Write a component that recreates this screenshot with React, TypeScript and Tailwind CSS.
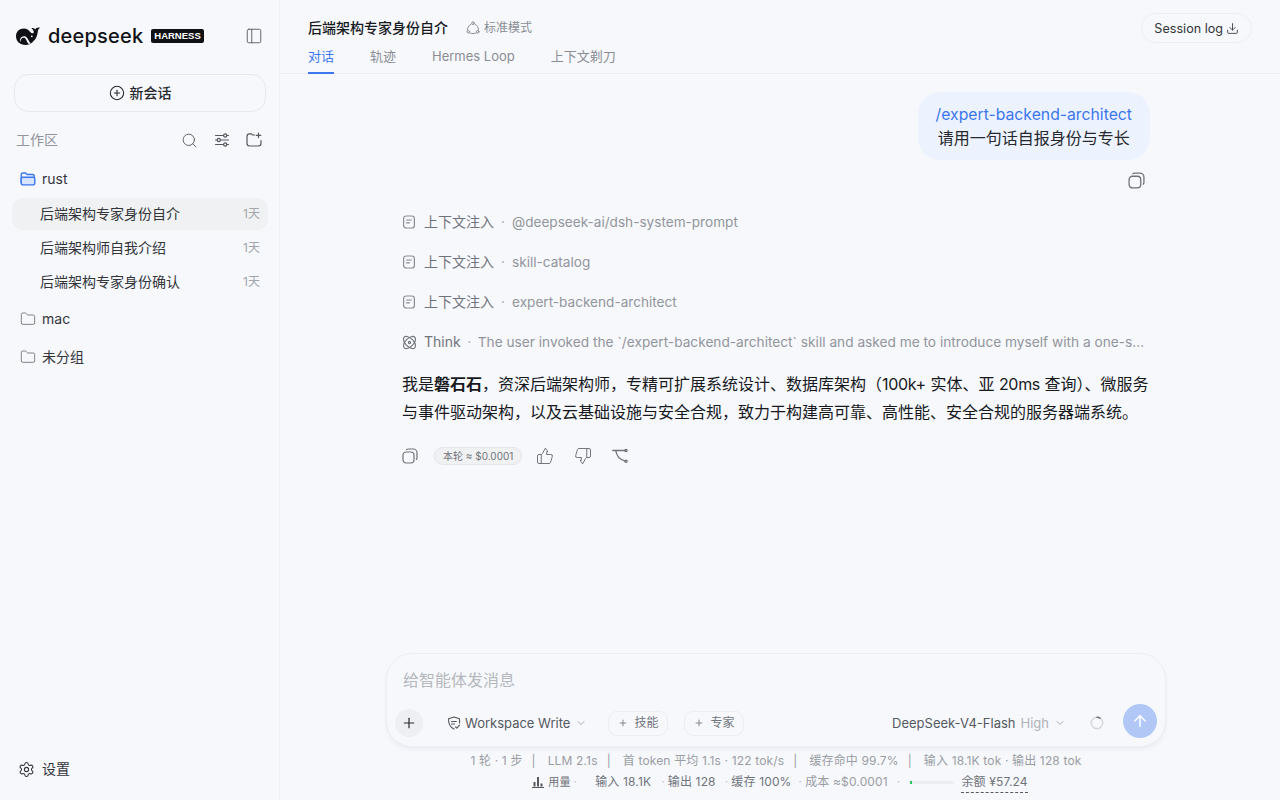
import {
  ArrowUp,
  ChevronDown,
  CirclePlus,
  Download,
  Folder,
  PanelLeft,
  Plus,
  Search,
  Settings,
  ThumbsDown,
  ThumbsUp,
} from "lucide-react";

const font = "font-['Inter','Noto_Sans_CJK_SC',sans-serif]";

const CopyIcon = ({ className }: { className?: string }) => (
  <svg viewBox="0 0 16 16" fill="none" stroke="currentColor" strokeWidth="1.200" className={className}>
    <rect x="1" y="4" width="11" height="11" rx="3.200" />
    <path d="M4.600 1.500c.5-.3 1-.5 1.700-.5h4.900C13.300 1 15 2.700 15 4.800v4.900c0 .7-.2 1.300-.6 1.800" strokeLinecap="round" />
  </svg>
);

const DocIcon = () => (
  <svg viewBox="0 0 14 14" fill="none" stroke="currentColor" strokeWidth="1.200" className="size-[14px] text-[#8a8d94]">
    <rect x="1.600" y="1" width="10.800" height="12" rx="2.600" />
    <path d="M4.500 5h5M4.500 7.800h3" strokeLinecap="round" />
  </svg>
);

const ThinkIcon = () => (
  <svg viewBox="0 0 14 14" fill="none" stroke="currentColor" strokeWidth="1.100" className="size-[15px] text-[#71747b]">
    <ellipse cx="7" cy="7" rx="7" ry="3.800" transform="rotate(45 7 7)" />
    <ellipse cx="7" cy="7" rx="7" ry="3.800" transform="rotate(-45 7 7)" />
    <circle cx="7" cy="7" r="1" />
  </svg>
);

const Whale = () => (
  <svg viewBox="0 0 24 18" className="h-[18px] w-6 shrink-0 text-[#0f1115]" fill="currentColor">
    <path d="M0 9C0 4.500 3.500 1.500 7.800 1.500c3.200 0 5 1.700 6.500 3.500.8 1 2.200 1.700 3.100 1 .8-.6.300-2-.4-3-.4-.7-1-1.300-1.600-1.700C16.800.8 18.200 1.300 19 2.600 19.800 1.200 21.600.3 24 .7c-1.200.9-2 2.100-2.200 3.700-.4 3.900-1.700 7.300-4.200 9.600C15.500 16.900 12.500 18 9.500 18 4 18 0 14.300 0 9z" />
    <path fill="#f6f8fc" d="M4.200 15.200c-1-3.400 1.300-6.400 4.300-6 3.300.5 3.600 4.500 6.200 7-.7.400-1.300.6-2 .7-2.300-1.900-2.100-5.500-4.700-6.100-1.900-.4-3.500 1.600-3.800 4.400z" />
    <circle cx="15.800" cy="9.300" r=".9" fill="#f6f8fc" />
  </svg>
);

const SlidersIcon = () => (
  <svg viewBox="0 0 16 16" fill="none" stroke="currentColor" strokeWidth="1.200" strokeLinecap="round" className="size-4 text-[#55585f]">
    <path d="M1.500 3.500h8M13 3.500h1.500M1.500 8h1.500M6.500 8h8M1.500 12.500h8M13 12.500h1.500" />
    <circle cx="11.200" cy="3.500" r="1.600" />
    <circle cx="4.800" cy="8" r="1.600" />
    <circle cx="11.200" cy="12.500" r="1.600" />
  </svg>
);

const NewFolderIcon = () => (
  <svg viewBox="0 0 16 16" fill="none" stroke="currentColor" strokeWidth="1.200" strokeLinecap="round" className="size-4 text-[#55585f]">
    <path d="M8.500 3H6.600L5.300 1.800H3.400C2.100 1.800 1 2.900 1 4.200v7.400c0 1.300 1.100 2.400 2.400 2.400h9.200c1.300 0 2.400-1.100 2.400-2.400V8.500" />
    <path d="M12.500 1v4.600M10.200 3.300h4.600" />
  </svg>
);

const BranchIcon = () => (
  <svg viewBox="0 0 16 16" fill="none" stroke="currentColor" strokeWidth="1.300" strokeLinecap="round" strokeLinejoin="round" className="size-4 text-[#6f7279]">
    <path d="M.8 2.500h12.400M3.800 2.500c.6 5 3.400 9 9.400 10.600" />
    <circle cx="14" cy="2.500" r="1.100" />
    <circle cx="14" cy="13.200" r="1.100" />
  </svg>
);

const ShieldIcon = () => (
  <svg viewBox="0 0 14 14" fill="none" stroke="currentColor" strokeWidth="1.100" strokeLinecap="round" strokeLinejoin="round" className="size-[14px] shrink-0 text-[#55585f]">
    <path d="M12.500 7c.1-1.300.1-2.700 0-4.200L7 1 1.500 2.800C1.300 8.500 3.500 11.500 7 13" />
    <path d="M4.500 5.500h4.800M4.500 8h3M8.500 11l1.300 1.200 2.700-3" />
  </svg>
);

const ModeIcon = () => (
  <svg viewBox="0 0 14 14" fill="none" stroke="currentColor" strokeWidth="1" strokeLinecap="round" className="size-[14px] shrink-0 text-[#8a8d94]">
    <circle cx="7" cy="2.200" r="1.300" />
    <circle cx="2.300" cy="10.800" r="1.300" />
    <circle cx="11.700" cy="10.800" r="1.300" />
    <path d="M5 3.200C2.900 4.300 1.400 6.400 1.500 9M9 3.200c2.100 1.100 3.600 3.200 3.500 5.800M4 12c1.900.8 4.100.8 6 0" />
  </svg>
);

const OpenFolderIcon = () => (
  <svg viewBox="0 0 16 16" fill="none" stroke="#3b76ef" strokeWidth="1.400" strokeLinejoin="round" className="size-4 shrink-0">
    <path d="M1.200 12V3.800c0-1 .8-1.800 1.800-1.800h2.500l1.500 1.500h5.500c1 0 1.800.8 1.800 1.800v1" />
    <path d="M1.200 7.700c0-.8.600-1.400 1.400-1.400h10.800c.8 0 1.400.6 1.400 1.400v4c0 1.200-1 2.200-2.200 2.200H3.400c-1.200 0-2.200-1-2.200-2.200z" fill="#d6e4fd" />
  </svg>
);

const UsageIcon = () => (
  <svg viewBox="0 0 12 12" fill="currentColor" className="size-3 shrink-0 text-[#55585f]">
    <path d="M0 11h12v1H0zM1.500 6h2v4.500h-2zM5 1h2v9.500H5zM8.500 7.500h2v3h-2z" />
  </svg>
);

const Spinner = () => (
  <svg viewBox="0 0 16 16" fill="none" strokeWidth="1.600" className="size-[14px]">
    <circle cx="8" cy="8" r="6.500" stroke="#d4d6da" />
    <path d="M8 1.500a6.500 6.500 0 0 1 3.500 1" stroke="#6f7279" strokeLinecap="round" />
  </svg>
);

const Sep = () => <span className="px-[3px] text-[#c2c5ca]">·</span>;
const Bar = () => <span className="ml-[9px] mr-[12px]">|</span>;

function Sidebar() {
  const chats = ["后端架构专家身份自介", "后端架构师自我介绍", "后端架构专家身份确认"];
  return (
    <aside className="flex h-full w-[280px] shrink-0 flex-col border-r border-[#eef0f3] pl-3 pr-[11px]">
      <div className="flex h-[74px] shrink-0 items-center pb-[2px] pl-1">
        <Whale />
        <span className="ml-2 text-[20px] font-medium leading-none tracking-[0.2px] text-[#0f1115]">deepseek</span>
        <span className="ml-2 rounded-[2px] bg-[#0f1115] px-[3px] font-['Liberation_Sans',sans-serif] text-[9.500px] font-bold leading-[14px] text-white">HARNESS</span>
        <PanelLeft className="ml-auto mr-[5px] size-[18px] text-[#55585f]" strokeWidth={1.2} />
      </div>

      <button className="mx-[2px] flex h-[38px] shrink-0 items-center justify-center gap-[5px] rounded-[14px] border border-[#e7e9ed] text-sm font-medium text-[#26282d]">
        <CirclePlus className="size-4" strokeWidth={1.6} />
        新会话
      </button>

      <div className="mt-[17px] flex h-[22px] items-center pl-1 pr-[6px]">
        <span className="text-sm text-[#92959b]">工作区</span>
        <div className="ml-auto flex items-center gap-4 text-[#55585f]">
          <Search className="size-[17px]" strokeWidth={1.3} />
          <SlidersIcon />
          <NewFolderIcon />
        </div>
      </div>

      <div className="mt-[18px] flex h-[20px] items-center gap-[6px] pl-2 text-sm text-[#33353a]">
        <OpenFolderIcon />
        rust
      </div>
      <div className="mt-[9px] flex flex-col gap-[2px]">
        {chats.map((c, i) => (
          <div key={c} className={`flex h-8 items-center justify-between rounded-[10px] pl-7 pr-2 text-sm text-[#33353a] ${i === 0 ? "bg-[#f0f1f3]" : ""}`}>
            {c}
            <span className="text-xs text-[#a3a6ab]">1天</span>
          </div>
        ))}
      </div>
      <div className="mt-[11px] flex h-[20px] items-center gap-[6px] pl-2 text-sm text-[#33353a]">
        <Folder className="size-4 text-[#6f7279]" strokeWidth={1.3} />
        mac
      </div>
      <div className="mt-[18px] flex h-[20px] items-center gap-[6px] pl-2 text-sm text-[#33353a]">
        <Folder className="size-4 text-[#6f7279]" strokeWidth={1.3} />
        未分组
      </div>

      <div className="mb-[21px] mt-auto flex h-5 items-center gap-[7px] pl-[6px] text-sm text-[#33353a]">
        <Settings className="size-[17px]" strokeWidth={1.5} />
        设置
      </div>
    </aside>
  );
}

function Header() {
  return (
    <header className="relative flex h-[74px] shrink-0 flex-col border-b border-[#eceef2] px-7 pt-[18px]">
      <div className="flex h-5 items-center">
        <span className="text-sm font-medium text-[#17191d]">后端架构专家身份自介</span>
        <span className="ml-[18px]"><ModeIcon /></span>
        <span className="ml-[4px] text-xs text-[#8a8d94]">标准模式</span>
      </div>
      <nav className="mt-2 flex gap-9 text-[13px]">
        <span className="border-b-2 border-[#3b76ef] pb-[6px] leading-5 text-[#3b76ef]">对话</span>
        <span className="leading-5 text-[#8a8d94]">轨迹</span>
        <span className="leading-5 text-[#8a8d94]">Hermes Loop</span>
        <span className="leading-5 text-[#8a8d94]">上下文剃刀</span>
      </nav>
      <button className="absolute right-7 top-[13px] flex h-[30px] items-center gap-[3px] rounded-full border border-[#eceef2] px-3 text-[12.600px] text-[#33353a]">
        <span className="mt-[2px]">Session log</span>
        <Download className="size-[13px]" strokeWidth={1.6} />
      </button>
    </header>
  );
}

function ContextRow({ tail }: { tail: string }) {
  return (
    <div className="flex h-10 items-center text-sm">
      <DocIcon />
      <span className="ml-2 text-[#71747b]">上下文注入</span>
      <span className="px-[7px] text-[#a3a6ab]">·</span>
      <span className="mt-[2px] text-[13.600px] text-[#92959b]">{tail}</span>
    </div>
  );
}

function Conversation() {
  return (
    <div className="min-h-0 flex-1 pr-2">
      <div className="mx-auto flex w-[748px] flex-col pt-[18px]">
        <div className="self-end rounded-[22px] bg-[#edf3fe] px-[18px] py-[10px] text-center text-[15.750px] leading-6 text-[#26282d]">
          <div className="pt-px text-[#3b76ef]">/expert-backend-architect</div>
          <div className="-mt-px text-base">请用一句话自报身份与专长</div>
        </div>
        <div className="mt-3 flex justify-end pr-[5px] text-[#6f7279]">
          <CopyIcon className="size-[17px]" />
        </div>

        <div className="mt-[13px]">
          <ContextRow tail="@deepseek-ai/dsh-system-prompt" />
          <ContextRow tail="skill-catalog" />
          <ContextRow tail="expert-backend-architect" />
          <div className="flex h-10 items-center pr-[5px] text-sm">
            <ThinkIcon />
            <span className="ml-[7px] text-[#71747b]">Think</span>
            <span className="px-[6.500px] text-[#a3a6ab]">·</span>
            <span className="mt-[2px] min-w-0 flex-1 truncate text-[13.700px] text-[#92959b]">The user invoked the `/expert-backend-architect` skill and asked me to introduce myself with a one-sentence summary of identity</span>
          </div>
        </div>

        <p className="mt-2 whitespace-nowrap text-base leading-7 text-[#17191d]">
          我是<b className="font-bold">磐石石</b>，资深后端架构师，专精可扩展系统设计、数据库架构（<span className="tracking-[-0.3px]">100k+</span> 实体、亚 <span className="tracking-[-0.3px]">20ms</span> 查询）、微服务
          <br />
          与事件驱动架构，以及云基础设施与安全合规，致力于构建高可靠、高性能、安全合规的服务器端系统。
        </p>

        <div className="mt-[21px] flex items-center text-[#6f7279]">
          <CopyIcon className="size-4" />
          <span className="ml-4 flex h-[18px] items-center rounded-full border border-[#e3e5e9] bg-[#f0f1f3] px-2 text-[10px] text-[#71747b]">本轮 ≈ $0.0001</span>
          <ThumbsUp className="ml-[14px] size-[18px]" strokeWidth={1.3} />
          <ThumbsDown className="ml-5 size-[18px]" strokeWidth={1.3} />
          <span className="ml-[20px]"><BranchIcon /></span>
        </div>
      </div>
    </div>
  );
}

function Composer() {
  return (
    <div className="pr-2">
      <div className="mx-auto flex h-[94px] w-[780px] flex-col rounded-[26px] border border-[#eceef2] bg-[#f7f8fc] pl-[8px] pr-2 shadow-[0_3px_4px_rgba(20,30,50,0.05)]">
        <div className="mt-4 pl-2 text-base leading-5 text-[#b5b8bd]">给智能体发消息</div>
        <div className="mt-[14px] flex items-center">
          <span className="flex size-[28px] shrink-0 items-center justify-center rounded-full bg-[#eeeff2] text-[#26282d]">
            <Plus className="size-4" strokeWidth={1.8} />
          </span>
          <span className="ml-[24px]"><ShieldIcon /></span>
          <span className="ml-[4px] mt-[2px] text-[13px] text-[#55585f]">Workspace Write</span>
          <ChevronDown className="ml-[5px] size-3 text-[#8a8d94]" strokeWidth={1.4} />
          <span className="ml-[21px] flex h-[25px] items-center gap-[6px] rounded-[9px] border border-[#eceef2] px-[9px] text-xs text-[#71747b]"><Plus className="size-[10px]" />技能</span>
          <span className="ml-4 flex h-[25px] items-center gap-[6px] rounded-[9px] border border-[#eceef2] px-[9px] text-xs text-[#71747b]"><Plus className="size-[10px]" />专家</span>
          <span className="ml-auto mt-[2px] text-[13px] text-[#55585f]">DeepSeek-V4-Flash</span>
          <span className="ml-[5px] mt-[2px] text-[13px] text-[#b0b3b8]">High</span>
          <ChevronDown className="ml-[5px] size-3 text-[#8a8d94]" strokeWidth={1.4} />
          <span className="ml-[24px] flex"><Spinner /></span>
          <span className="mb-1 ml-[19px] flex size-[34px] items-center justify-center rounded-full bg-[#b1c8f7] text-white">
            <ArrowUp className="size-[18px]" strokeWidth={2} />
          </span>
        </div>
      </div>
    </div>
  );
}

function Stats() {
  return (
    <div className="flex h-[53px] shrink-0 flex-col items-center pr-2 text-xs tracking-[0.15px] text-[#9a9da3]">
      <div className="mt-[6px] flex h-[16px] items-center">
        <span>1 轮 · 1 步</span><Bar /><span>LLM 2.1s</span><Bar /><span>首 token 平均 1.1s · 122 tok/s</span><Bar /><span>缓存命中 99.7%</span><Bar /><span>输入 18.1K tok · 输出 128 tok</span>
      </div>
      <div className="ml-2 mt-[5px] flex h-[16px] items-center">
        <UsageIcon />
        <span className="ml-[4px] text-[11px] text-[#71747b]">用量</span><Sep />
        <span className="ml-[15px] text-[#71747b]">输入 18.1K</span><span className="ml-[7px]" /><Sep />
        <span className="text-[#71747b]">输出 128</span><span className="ml-[6px]" /><Sep />
        <span className="text-[#71747b]">缓存 100%</span><span className="ml-[4px]" /><Sep />
        <span>成本 ≈$0.0001</span><span className="ml-[6px]" /><Sep />
        <span className="ml-[7px] h-[3px] w-[44px] rounded-full bg-[#eceef0]"><span className="block h-[3px] w-[2px] bg-[#22c55e]" /></span>
        <span className="ml-[7px] mt-[3px] border-b border-dashed border-[#55585f] pb-[2px] text-[#71747b]">余额 ¥57.24</span>
      </div>
    </div>
  );
}

export default function App() {
  return (
    <div className={`${font} flex h-screen w-full overflow-hidden bg-[#f6f8fc] antialiased`}>
      <Sidebar />
      <main className="flex min-w-0 flex-1 flex-col">
        <Header />
        <Conversation />
        <Composer />
        <Stats />
      </main>
    </div>
  );
}
